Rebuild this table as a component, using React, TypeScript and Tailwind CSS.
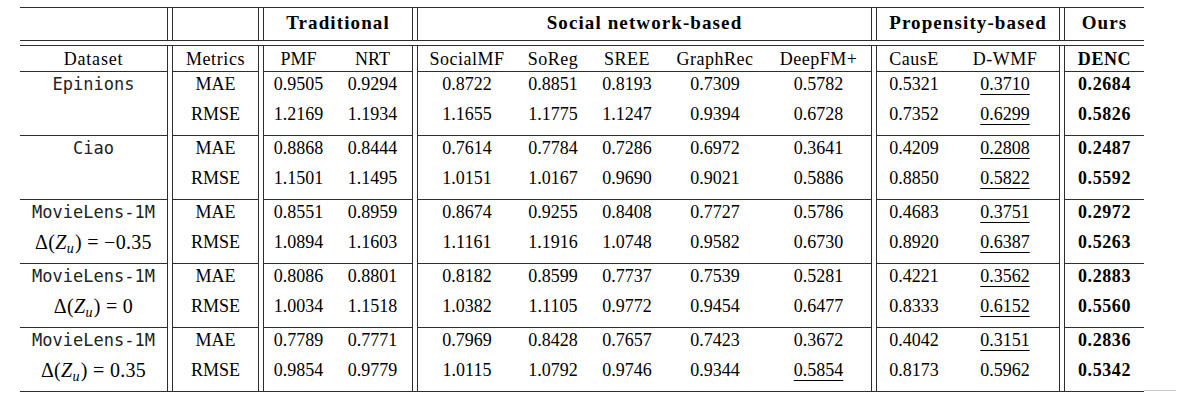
import React from "react";

type V = { v: string; u?: boolean };
type Row = { m: string; trad: V[]; social: V[]; prop: V[]; ours: string };
type Section = { ds: React.ReactNode; ds2?: React.ReactNode; rows: [Row, Row] };

const p = (s: string): V[] =>
  s.split(" ").map((x) => (x.endsWith("u") ? { v: x.slice(0, -1), u: true } : { v: x }));

const Delta = ({ val }: { val: string }) => (
  <span className="font-['Liberation_Serif',serif] text-[20px] tracking-[0.3px]">
    Δ(<span className="italic">Z</span>
    <span className="italic text-[14px] relative top-[4px] mr-[1px]">u</span>) = {val}
  </span>
);

const sections: Section[] = [
  {
    ds: "Epinions",
    rows: [
      { m: "MAE", trad: p("0.9505 0.9294"), social: p("0.8722 0.8851 0.8193 0.7309 0.5782"), prop: p("0.5321 0.3710u"), ours: "0.2684" },
      { m: "RMSE", trad: p("1.2169 1.1934"), social: p("1.1655 1.1775 1.1247 0.9394 0.6728"), prop: p("0.7352 0.6299u"), ours: "0.5826" },
    ],
  },
  {
    ds: "Ciao",
    rows: [
      { m: "MAE", trad: p("0.8868 0.8444"), social: p("0.7614 0.7784 0.7286 0.6972 0.3641"), prop: p("0.4209 0.2808u"), ours: "0.2487" },
      { m: "RMSE", trad: p("1.1501 1.1495"), social: p("1.0151 1.0167 0.9690 0.9021 0.5886"), prop: p("0.8850 0.5822u"), ours: "0.5592" },
    ],
  },
  {
    ds: "MovieLens-1M",
    ds2: <Delta val="−0.35" />,
    rows: [
      { m: "MAE", trad: p("0.8551 0.8959"), social: p("0.8674 0.9255 0.8408 0.7727 0.5786"), prop: p("0.4683 0.3751u"), ours: "0.2972" },
      { m: "RMSE", trad: p("1.0894 1.1603"), social: p("1.1161 1.1916 1.0748 0.9582 0.6730"), prop: p("0.8920 0.6387u"), ours: "0.5263" },
    ],
  },
  {
    ds: "MovieLens-1M",
    ds2: <Delta val="0" />,
    rows: [
      { m: "MAE", trad: p("0.8086 0.8801"), social: p("0.8182 0.8599 0.7737 0.7539 0.5281"), prop: p("0.4221 0.3562u"), ours: "0.2883" },
      { m: "RMSE", trad: p("1.0034 1.1518"), social: p("1.0382 1.1105 0.9772 0.9454 0.6477"), prop: p("0.8333 0.6152u"), ours: "0.5560" },
    ],
  },
  {
    ds: "MovieLens-1M",
    ds2: <Delta val="0.35" />,
    rows: [
      { m: "MAE", trad: p("0.7789 0.7771"), social: p("0.7969 0.8428 0.7657 0.7423 0.3672"), prop: p("0.4042 0.3151u"), ours: "0.2836" },
      { m: "RMSE", trad: p("0.9854 0.9779"), social: p("1.0115 1.0792 0.9746 0.9344 0.5854u"), prop: p("0.8173 0.5962"), ours: "0.5342" },
    ],
  },
];

const tradW = ["w-[69px]", "w-[79px]"];
const socialW = ["w-[98px]", "w-[74px]", "w-[74px]", "w-[102px]", "w-[105px]"];
const propW = ["w-[74px]", "w-[108px]"];

const LINE = "border-[#2e2e2e]";
const Gap = () => <div className="w-[4px] shrink-0" />;

const Num = ({ v, w }: { v: V; w: string }) => (
  <div className={`${w} flex justify-center`}>
    <span className={v.u ? "underline decoration-1 underline-offset-[4px]" : ""}>{v.v}</span>
  </div>
);

const RowBox = ({ children }: { children: React.ReactNode }) => (
  <div className="h-[24px] flex items-center">{children}</div>
);

function SectionRow({ s, last }: { s: Section; last: boolean }) {
  const bb = last ? "" : `border-b ${LINE}`;
  const h = last ? "h-[63px]" : "h-[64px]";
  const col = "flex flex-col gap-[6px]";
  return (
    <div className={`flex ${h}`}>
      <div className={`w-[148px] shrink-0 border-r ${LINE} ${bb} ${col}`}>
        <RowBox>
          <div className="w-full text-center font-['DejaVu_Sans_Mono',monospace] text-[17px] text-[#222]">{s.ds}</div>
        </RowBox>
        <RowBox>
          <div className="w-full text-center">{s.ds2}</div>
        </RowBox>
      </div>
      <Gap />
      <div className={`w-[87px] shrink-0 border-x ${LINE} ${bb} ${col}`}>
        {s.rows.map((r) => (
          <RowBox key={r.m}>
            <div className="w-full text-center">{r.m}</div>
          </RowBox>
        ))}
      </div>
      <Gap />
      <div className={`w-[150px] shrink-0 border-x ${LINE} ${bb} ${col}`}>
        {s.rows.map((r) => (
          <RowBox key={r.m}>
            {r.trad.map((v, i) => (
              <Num key={i} v={v} w={tradW[i]} />
            ))}
          </RowBox>
        ))}
      </div>
      <Gap />
      <div className={`w-[455px] shrink-0 border-x ${LINE} ${bb} ${col}`}>
        {s.rows.map((r) => (
          <RowBox key={r.m}>
            {r.social.map((v, i) => (
              <Num key={i} v={v} w={socialW[i]} />
            ))}
          </RowBox>
        ))}
      </div>
      <Gap />
      <div className={`w-[184px] shrink-0 border-x ${LINE} ${bb} ${col}`}>
        {s.rows.map((r) => (
          <RowBox key={r.m}>
            {r.prop.map((v, i) => (
              <Num key={i} v={v} w={propW[i]} />
            ))}
          </RowBox>
        ))}
      </div>
      <Gap />
      <div className={`w-[80px] shrink-0 border-l ${LINE} ${bb} ${col}`}>
        {s.rows.map((r) => (
          <RowBox key={r.m}>
            <div className="w-full text-center font-bold tracking-[0.6px]">{r.ours}</div>
          </RowBox>
        ))}
      </div>
    </div>
  );
}

export default function App() {
  const hc = "flex items-center justify-center";
  const h1 = "font-bold text-[19px] tracking-[1.1px] pb-[4px]";
  return (
    <div className="w-[1197px] h-[405px] bg-white text-black pl-[20px] pt-[7px] font-['Liberation_Serif',serif] text-[18px] leading-none relative">
      <div className="w-[1124px]">
        {/* header row 1 */}
        <div className={`flex h-[34px] border-y ${LINE}`}>
          <div className={`w-[148px] shrink-0 border-r ${LINE}`} />
          <Gap />
          <div className={`w-[87px] shrink-0 border-x ${LINE}`} />
          <Gap />
          <div className={`w-[150px] shrink-0 border-x ${LINE} ${hc} ${h1}`}>Traditional</div>
          <Gap />
          <div className={`w-[455px] shrink-0 border-x ${LINE} ${hc} ${h1}`}>Social network-based</div>
          <Gap />
          <div className={`w-[184px] shrink-0 border-x ${LINE} ${hc} ${h1}`}>Propensity-based</div>
          <Gap />
          <div className={`w-[80px] shrink-0 border-l ${LINE} ${hc} ${h1}`}>Ours</div>
        </div>
        <div className="h-[4px]" />
        {/* body */}
        <div className={`border-y ${LINE}`}>
          <div className="flex h-[26px]">
            <div className={`w-[148px] shrink-0 border-r border-b ${LINE} ${hc} tracking-[0.8px]`}>Dataset</div>
            <Gap />
            <div className={`w-[87px] shrink-0 border-x border-b ${LINE} ${hc} tracking-[0.6px]`}>Metrics</div>
            <Gap />
            <div className={`w-[150px] shrink-0 border-x border-b ${LINE} flex items-center`}>
              <div className={`${tradW[0]} text-center`}>PMF</div>
              <div className={`${tradW[1]} text-center`}>NRT</div>
            </div>
            <Gap />
            <div className={`w-[455px] shrink-0 border-x border-b ${LINE} flex items-center tracking-[0.5px]`}>
              {["SocialMF", "SoReg", "SREE", "GraphRec", "DeepFM+"].map((t, i) => (
                <div key={t} className={`${socialW[i]} text-center`}>{t}</div>
              ))}
            </div>
            <Gap />
            <div className={`w-[184px] shrink-0 border-x border-b ${LINE} flex items-center tracking-[0.5px]`}>
              <div className={`${propW[0]} text-center`}>CausE</div>
              <div className={`${propW[1]} text-center`}>D-WMF</div>
            </div>
            <Gap />
            <div className={`w-[80px] shrink-0 border-l border-b ${LINE} ${hc} font-bold tracking-[0.6px]`}>DENC</div>
          </div>
          {sections.map((s, i) => (
            <SectionRow key={i} s={s} last={i === sections.length - 1} />
          ))}
        </div>
      </div>
      <div className="absolute left-[1144px] top-[390px] w-[32px] h-[1px] bg-[#c8c8c8]" />
    </div>
  );
}
